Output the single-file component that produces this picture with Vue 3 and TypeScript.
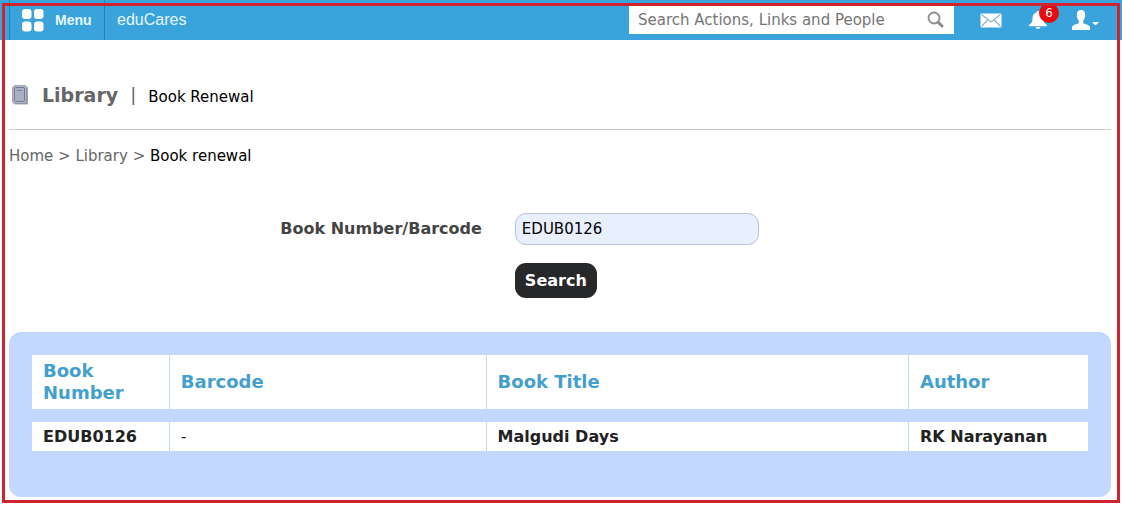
<script setup lang="ts">
import { ref } from 'vue'

interface Book {
  number: string
  barcode: string
  title: string
  author: string
}

const query = ref('')
const bookNumber = ref('EDUB0126')
const notifications = 6
const books: Book[] = [
  { number: 'EDUB0126', barcode: '-', title: 'Malgudi Days', author: 'RK Narayanan' },
]
</script>

<template>
  <div class="page">
    <header class="topbar">
      <button class="menu" type="button">
        <svg width="22" height="23" viewBox="0 0 22 23" fill="#fff" aria-hidden="true">
          <rect x="0" y="0" width="9.500" height="10" rx="3" />
          <rect x="12" y="0" width="9.500" height="10" rx="3" />
          <rect x="0" y="12.500" width="9.500" height="10" rx="3" />
          <rect x="12" y="12.500" width="9.500" height="10" rx="3" />
        </svg>
        <span>Menu</span>
      </button>
      <a class="brand" href="#">eduCares</a>
      <form class="finder" role="search" @submit.prevent>
        <input v-model="query" type="text" placeholder="Search Actions, Links and People" aria-label="Search Actions, Links and People" />
        <button type="submit" aria-label="Search">
          <svg width="18" height="18" viewBox="0 0 18 18" fill="none" stroke="#8b8b8b" aria-hidden="true">
            <circle cx="7" cy="7" r="5.500" stroke-width="1.800" />
            <path d="M11.500 11.500l3.500 3.500" stroke-width="3" stroke-linecap="round" />
          </svg>
        </button>
      </form>
      <nav class="tools" aria-label="Account">
        <button type="button" aria-label="Messages">
          <svg width="22" height="15" viewBox="0 0 22 15" aria-hidden="true">
            <rect x="0.500" y="0.500" width="21" height="14" rx="1" fill="#fff" />
            <path d="M1.500 1.500L11 9l9.500-7.500M1.500 13.500l6.500-7M20.500 13.500L14 6.500" fill="none" stroke="#8fb4c6" stroke-width="1.200" />
          </svg>
        </button>
        <button class="bell" type="button" aria-label="Notifications">
          <svg width="20" height="18" viewBox="0 0 20 18" fill="#fff" aria-hidden="true">
            <path d="M10 0c1 0 1.500.6 1.500 1.500C14.500 2.200 15.500 4.500 15.500 7.500c0 3.500 1 5 3.500 6.500v1.200H1V14c2.500-1.500 3.500-3 3.500-6.500 0-3 1-5.300 4-6C8.500.6 9 0 10 0zM7.500 16h5c-.5 1.300-1.300 1.800-2.500 1.800S8 17.300 7.500 16z" />
          </svg>
          <span class="badge">{{ notifications }}</span>
        </button>
        <button class="user" type="button" aria-label="Profile">
          <svg width="27" height="20" viewBox="0 0 27 20" fill="#fff" aria-hidden="true">
            <path d="M9 0c3 0 4.300 2 4.200 5 0 2.600-.8 4.400-2 5.700v2.300c.6 1.300 6.800 1.500 6.800 4.500V20H0v-2.500c0-3 6.200-3.200 6.800-4.500v-2.300C5.600 9.400 4.800 7.600 4.800 5 4.700 2 6 0 9 0z" />
            <path d="M20 12h7l-3.500 3.500z" />
          </svg>
        </button>
      </nav>
    </header>

    <main>
      <div class="heading">
        <svg width="16" height="20" viewBox="0 0 16 20" aria-hidden="true">
          <path d="M2.500.5h11l2 2v16.500h-13l-2-2V2.500z" fill="#b3b8c8" stroke="#a0a5b4" />
          <rect x="2.500" y="2.500" width="10" height="14" rx="1" fill="#a9b0c6" stroke="#747a8c" />
          <path d="M5 5.500h5" stroke="#7b8297" />
          <path d="M14.500 3v15.500H3" fill="none" stroke="#8f94a3" />
        </svg>
        <h1>Library</h1>
        <span class="bar">|</span>
        <h2>Book Renewal</h2>
      </div>

      <nav class="crumbs" aria-label="Breadcrumb">
        <a href="#">Home</a> &gt; <a href="#">Library</a> &gt; <span>Book renewal</span>
      </nav>

      <form class="lookup" @submit.prevent>
        <label for="book-number">Book Number/Barcode</label>
        <input id="book-number" v-model="bookNumber" type="text" />
        <button type="submit">Search</button>
      </form>

      <section class="panel">
        <table>
          <colgroup>
            <col class="c-number" />
            <col class="c-barcode" />
            <col class="c-title" />
            <col class="c-author" />
          </colgroup>
          <thead>
            <tr>
              <th scope="col">Book Number</th>
              <th scope="col">Barcode</th>
              <th scope="col">Book Title</th>
              <th scope="col">Author</th>
            </tr>
          </thead>
          <tbody>
            <tr class="spacer" aria-hidden="true"><td colspan="4"></td></tr>
            <tr v-for="book in books" :key="book.number">
              <td>{{ book.number }}</td>
              <td class="plain">{{ book.barcode }}</td>
              <td>{{ book.title }}</td>
              <td>{{ book.author }}</td>
            </tr>
          </tbody>
        </table>
      </section>
    </main>
    <div class="frame"></div>
  </div>
</template>

<style>
body {
  margin: 0;
  background: #fff;
}
</style>

<style scoped>
.page {
  position: relative;
  padding-bottom: 9px;
  font: 15px/20px Verdana, "DejaVu Sans", sans-serif;
  color: #000;
}
.page * {
  box-sizing: border-box;
}
button,
input {
  margin: 0;
  padding: 0;
  border: 0;
  font: inherit;
}
button {
  background: none;
  cursor: pointer;
}
svg {
  display: block;
}
a {
  color: inherit;
  text-decoration: none;
}
.frame {
  position: absolute;
  inset: 3px 2px;
  border: 3px solid #cf2430;
  pointer-events: none;
}
.topbar {
  display: flex;
  align-items: center;
  height: 40px;
  padding: 0 23px 0 9px;
  background: #3aa3dc;
}
.menu {
  display: flex;
  align-items: center;
  gap: 11px;
  width: 96px;
  height: 40px;
  padding-left: 12px;
  border-left: 1px solid #2583b8;
  border-right: 1px solid #2583b8;
  color: #e4f8ff;
  font: bold 14px/20px "Liberation Sans", Arial, sans-serif;
}
.brand {
  margin-left: 12px;
  color: #e4f8ff;
  font: 16px/20px "Liberation Sans", Arial, sans-serif;
}
.finder {
  display: flex;
  align-items: center;
  width: 325px;
  height: 28px;
  margin-left: auto;
  padding: 0 9px;
  background: #fff;
}
.finder input {
  flex: 1;
  min-width: 0;
  background: none;
  color: #666;
  outline: none;
}
.finder input::placeholder {
  color: #757575;
  opacity: 1;
}
.tools {
  display: flex;
  align-items: center;
  margin-left: 26px;
}
.bell {
  position: relative;
  margin-left: 26px;
}
.badge {
  position: absolute;
  top: -8px;
  left: 11px;
  width: 20px;
  height: 20px;
  border-radius: 50%;
  background: #e60a0f;
  color: #fff;
  font-size: 12px;
  line-height: 20px;
  text-align: center;
}
.user {
  margin-left: 24px;
}
main {
  padding: 0 11px 0 9px;
}
.heading {
  display: flex;
  align-items: center;
  height: 90px;
  padding: 20px 0 0 3px;
  border-bottom: 1px solid #ccc;
}
h1,
h2 {
  margin: 0;
}
h1 {
  margin-left: 14px;
  color: #666;
  font-size: 19px;
  line-height: 24px;
}
.bar {
  margin: 0 12px;
  color: #666;
  font-size: 18px;
}
h2 {
  padding-top: 4px;
  font-size: 15px;
  font-weight: normal;
}
.crumbs {
  margin-top: 16px;
  color: #666;
}
.crumbs span {
  color: #000;
}
.lookup {
  display: grid;
  grid-template-columns: 43% 244px;
  column-gap: 32px;
  row-gap: 18px;
  margin-top: 47px;
}
.lookup label {
  align-self: center;
  padding-right: 1px;
  text-align: right;
  color: #444;
  font-size: 16px;
  font-weight: bold;
}
.lookup input {
  height: 32px;
  padding: 0 6px;
  border: 1px solid #b9c2d0;
  border-radius: 11px;
  background: #e8f0fe;
}
.lookup button {
  grid-column: 2;
  justify-self: start;
  height: 35px;
  padding: 0 10px;
  border-radius: 11px;
  background: #27282a;
  color: #fff;
  font-size: 16px;
  font-weight: bold;
}
.panel {
  margin-top: 34px;
  padding: 23px 23px 46px;
  border-radius: 12px;
  background: #c3d8ff;
}
table {
  width: 100%;
  border-collapse: collapse;
  table-layout: fixed;
}
.c-number {
  width: 13%;
}
.c-barcode {
  width: 30%;
}
.c-title {
  width: 40%;
}
.c-author {
  width: 17%;
}
th,
td {
  padding: 5px 11px;
  border-right: 1px solid #c3dbe8;
  background: #fff;
  text-align: left;
}
th:last-child,
td:last-child {
  border-right: 0;
}
th {
  color: #459fcd;
  font-size: 18px;
  line-height: 22px;
}
td {
  height: 29px;
  padding: 5px 11px 4px;
  color: #222;
  font-size: 16px;
  font-weight: bold;
}
.plain {
  font-weight: normal;
}
.spacer td {
  height: 13px;
  padding: 0;
  background: none;
}
</style>
